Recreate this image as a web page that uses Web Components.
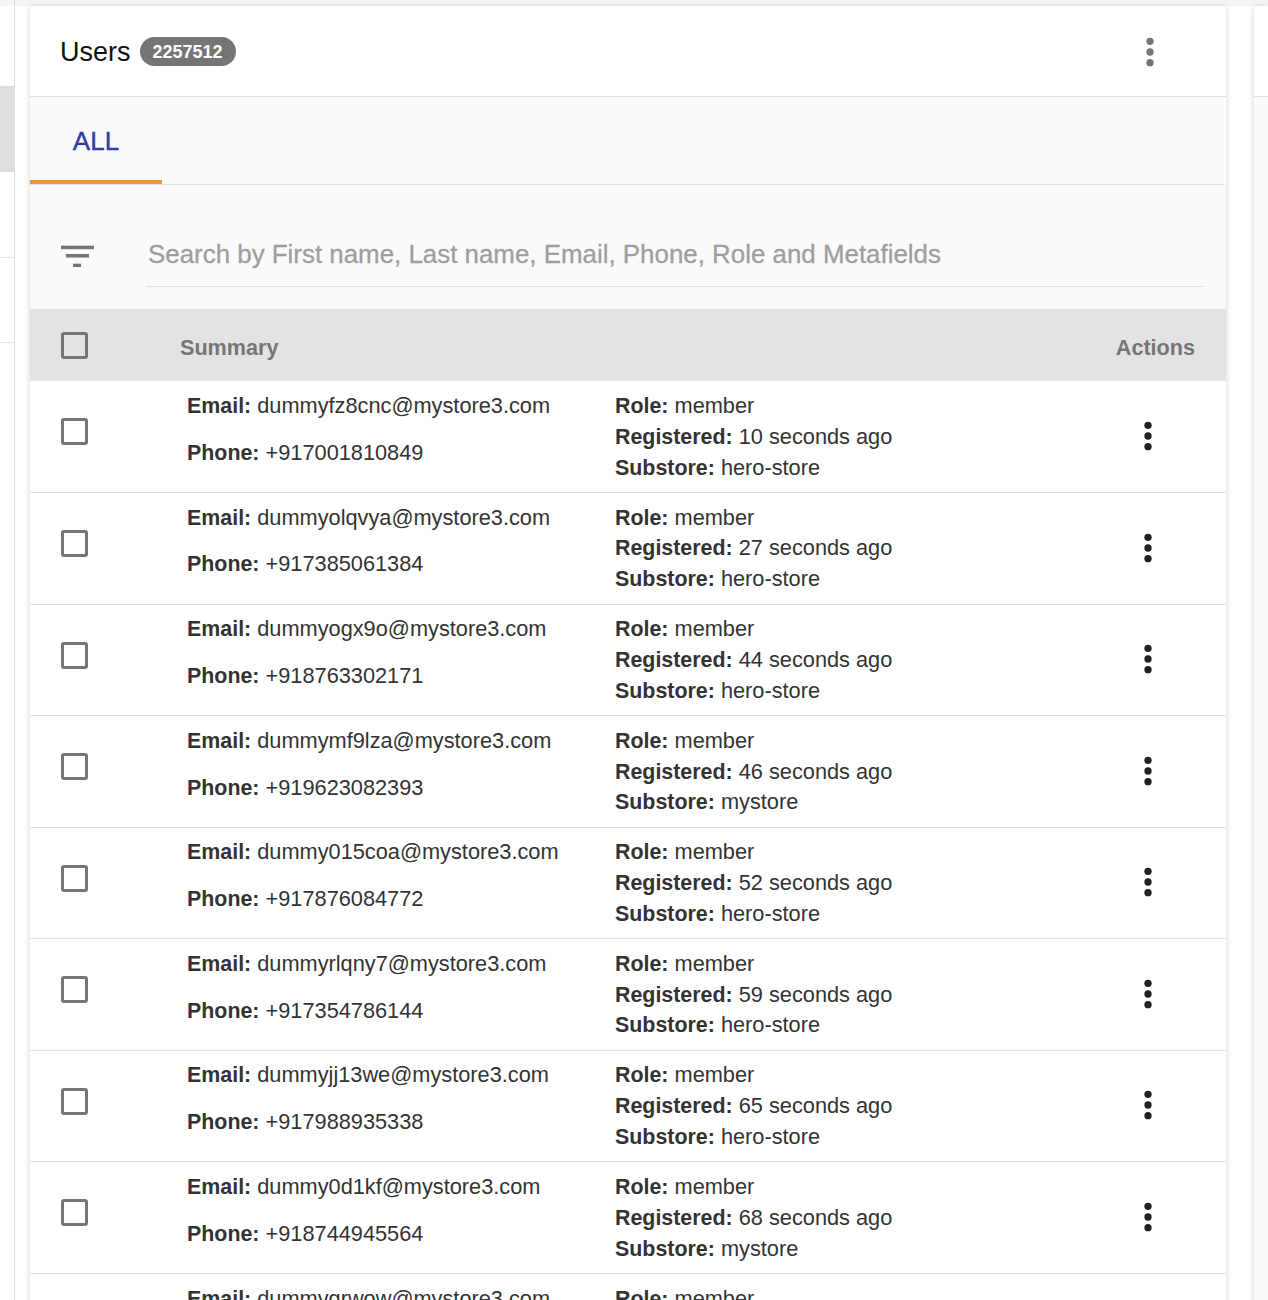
<!DOCTYPE html>
<html>
<head>
<meta charset="utf-8">
<title>Users</title>
<style>
    html, body {
        margin: 0;
        height: 1300px;
        overflow: hidden;
        background: #fff;
        font-family: 'Liberation Sans', Arial, sans-serif;
    }
    .page {
        display: grid;
        grid-template-columns: 15px 1196px 1fr;
        column-gap: 15px;
        height: 1294px;
        padding-top: 6px;
        background: linear-gradient(#f5f5f5 6px, #fff 6px);
    }
    .page > :nth-child(1) { margin-top: -6px; }
    .page > :nth-child(3) { margin-left: 13px; }
</style>
</head>
<body>
<div class="page">
    <side-stub></side-stub>
    <users-card>
        <card-header slot="header" count="2257512">Users</card-header>
        <tab-bar slot="tabs"></tab-bar>
        <search-bar slot="search" placeholder="Search by First name, Last name, Email, Phone, Role and Metafields"></search-bar>
        <users-table slot="table"></users-table>
    </users-card>
    <next-panel></next-panel>
</div>

<script>
/*
* 用户列表页面组件
*/
const USERS = [
    ['dummyfz8cnc@mystore3.com', '+917001810849', '10 seconds ago', 'hero-store'],
    ['dummyolqvya@mystore3.com', '+917385061384', '27 seconds ago', 'hero-store'],
    ['dummyogx9o@mystore3.com', '+918763302171', '44 seconds ago', 'hero-store'],
    ['dummymf9lza@mystore3.com', '+919623082393', '46 seconds ago', 'mystore'],
    ['dummy015coa@mystore3.com', '+917876084772', '52 seconds ago', 'hero-store'],
    ['dummyrlqny7@mystore3.com', '+917354786144', '59 seconds ago', 'hero-store'],
    ['dummyjj13we@mystore3.com', '+917988935338', '65 seconds ago', 'hero-store'],
    ['dummy0d1kf@mystore3.com', '+918744945564', '68 seconds ago', 'mystore'],
    ['dummygrwow@mystore3.com', '', '', '']
];

const DOTS = `
    <circle cx="4" cy="4.33" r="3.65"></circle>
    <circle cx="4" cy="15" r="3.65"></circle>
    <circle cx="4" cy="25.67" r="3.65"></circle>
`;

class Base extends HTMLElement {
    constructor() {
        super();
        this.attachShadow({mode: 'open'});
    }
}

class SideStub extends Base {
    connectedCallback() {
        this.shadowRoot.innerHTML = `
            <style>
                :host {
                    display: block;
                    height: 1300px;
                    border-right: 1px solid #dcdcdc;
                    box-sizing: border-box;
                }
                .block { height: 86px; }
                .active { height: 86px; background: #dedede; }
                .item { height: 85px; border-bottom: 1px solid #e6e6e6; box-sizing: border-box; }
                .item.first { height: 86px; }
            </style>
            <div class="block"></div>
            <div class="active"></div>
            <div class="item first"></div>
            <div class="item"></div>
        `;
    }
}

class NextPanel extends Base {
    connectedCallback() {
        this.shadowRoot.innerHTML = `
            <style>
                :host {
                    display: block;
                    background: #fafafa;
                    box-shadow: 0 1px 6px rgba(0, 0, 0, 0.18);
                }
                .top { height: 90px; background: #fff; border-bottom: 1px solid #e0e0e0; }
            </style>
            <div class="top"></div>
        `;
    }
}

class UsersCard extends Base {
    connectedCallback() {
        this.shadowRoot.innerHTML = `
            <style>
                :host {
                    display: block;
                    background: #fff;
                    box-shadow: 0 1px 6px rgba(0, 0, 0, 0.18);
                }
            </style>
            <slot name="header"></slot>
            <slot name="tabs"></slot>
            <slot name="search"></slot>
            <slot name="table"></slot>
        `;
    }
}

class CardHeader extends Base {
    connectedCallback() {
        this.shadowRoot.innerHTML = `
            <style>
                :host {
                    display: flex;
                    align-items: center;
                    height: 90px;
                    padding: 0 72px 0 30px;
                    border-bottom: 1px solid #e0e0e0;
                    color: #111;
                }
                .title { font-size: 27px; padding-top: 2px; }
                .badge {
                    margin-left: 9px;
                    padding: 0 13px;
                    height: 29px;
                    line-height: 30px;
                    border-radius: 15px;
                    background: #757575;
                    color: #fff;
                    font-size: 18px;
                    font-weight: bold;
                }
                .more { margin-left: auto; display: block; margin-top: 2px; }
            </style>
            <span class="title"><slot></slot></span>
            <span class="badge">${this.getAttribute('count')}</span>
            <svg class="more" width="8" height="30" viewBox="0 0 8 30" fill="#757575">${DOTS}</svg>
        `;
    }
}

class TabBar extends Base {
    connectedCallback() {
        this.shadowRoot.innerHTML = `
            <style>
                :host {
                    display: block;
                    height: 88px;
                    padding-right: 2px;
                    background: #fafafa;
                    background-clip: content-box;
                }
                .line {
                    display: flex;
                    height: 88px;
                    border-bottom: 1px solid #e0e0e0;
                    box-sizing: border-box;
                }
                .tab {
                    display: flex;
                    align-items: center;
                    justify-content: center;
                    width: 132px;
                    height: 87px;
                    box-sizing: border-box;
                    padding-top: 5px;
                    border-bottom: 4px solid #f0982f;
                    color: #303f9f;
                    font-size: 26px;
                    -webkit-text-stroke: 0.4px #303f9f;
                }
            </style>
            <div class="line"><div class="tab">ALL</div></div>
        `;
    }
}

class SearchBar extends Base {
    connectedCallback() {
        this.shadowRoot.innerHTML = `
            <style>
                :host {
                    display: flex;
                    height: 124px;
                    padding: 0 22px 0 30px;
                    background: #fafafa;
                    box-sizing: border-box;
                }
                svg { flex: none; margin: 60px 52px 0 0; }
                .field {
                    flex: 1;
                    height: 102px;
                    box-sizing: border-box;
                    border-bottom: 1px solid #e0e0e0;
                    padding: 54px 0 0 2px;
                    color: #9e9e9e;
                    font-size: 25.9px;
                    line-height: 30px;
                    -webkit-text-stroke: 0.3px #9e9e9e;
                }
            </style>
            <svg width="34" height="22" viewBox="0 0 34 22" fill="#757575">
                <rect x="1" y="0.7" width="33" height="3.5"></rect>
                <rect x="6" y="9" width="23" height="3.5"></rect>
                <rect x="13" y="18.7" width="8" height="3.3"></rect>
            </svg>
            <div class="field">${this.getAttribute('placeholder')}</div>
        `;
    }
}

class CheckBox extends Base {
    connectedCallback() {
        this.shadowRoot.innerHTML = `
            <style>
                :host {
                    display: block;
                    width: 27px;
                    height: 27px;
                    box-sizing: border-box;
                    border: 3px solid #757575;
                    border-radius: 3px;
                }
            </style>
        `;
    }
}

class UsersTable extends Base {
    connectedCallback() {
        this.shadowRoot.innerHTML = `
            <style>
                :host {
                    display: block;
                    font-size: 21.75px;
                    line-height: 30.8px;
                    color: #333;
                }
                .head {
                    display: flex;
                    align-items: center;
                    height: 72.43px;
                    padding: 0 31px;
                    background: #e3e3e3;
                    color: #757575;
                    font-weight: bold;
                    font-size: 21.6px;
                }
                .head check-box { margin-top: 1px; }
                .head span { padding-top: 7px; }
                .head .summary { margin-left: 92px; }
                .head .actions { margin-left: auto; }
                user-row { display: block; }
            </style>
            <div class="head">
                <check-box></check-box>
                <span class="summary">Summary</span>
                <span class="actions">Actions</span>
            </div>
            ${USERS.map(u => `<user-row email="${u[0]}" phone="${u[1]}" time="${u[2]}" store="${u[3]}"></user-row>`).join('')}
        `;
    }
}

class UserRow extends Base {
    connectedCallback() {
        const a = name => this.getAttribute(name);
        const line = (label, value) => value ? `<div><b>${label}:</b> ${value}</div>` : '';
        this.shadowRoot.innerHTML = `
            <style>
                :host {
                    display: block;
                }
                .row {
                    display: flex;
                    height: 111.57px;
                    box-sizing: border-box;
                    padding: 9.6px 0 0 31px;
                    border-bottom: 1px solid #e0e0e0;
                }
                b { font-size: 21.4px; }
                check-box { margin-top: 27.47px; flex: none; }
                .contact { width: 428px; margin-left: 99px; flex: none; }
                .contact div + div { margin-top: 16px; }
                .meta { flex: 1; }
                svg { flex: none; margin: 29.95px 74px 0 0; }
            </style>
            <div class="row">
                <check-box></check-box>
                <div class="contact">
                    ${line('Email', a('email'))}
                    ${line('Phone', a('phone'))}
                </div>
                <div class="meta">
                    ${line('Role', 'member')}
                    ${line('Registered', a('time'))}
                    ${line('Substore', a('store'))}
                </div>
                <svg width="8" height="30" viewBox="0 0 8 30" fill="#212121">${DOTS}</svg>
            </div>
        `;
    }
}

customElements.define('side-stub', SideStub);
customElements.define('next-panel', NextPanel);
customElements.define('users-card', UsersCard);
customElements.define('card-header', CardHeader);
customElements.define('tab-bar', TabBar);
customElements.define('search-bar', SearchBar);
customElements.define('check-box', CheckBox);
customElements.define('user-row', UserRow);
customElements.define('users-table', UsersTable);
</script>
</body>
</html>
